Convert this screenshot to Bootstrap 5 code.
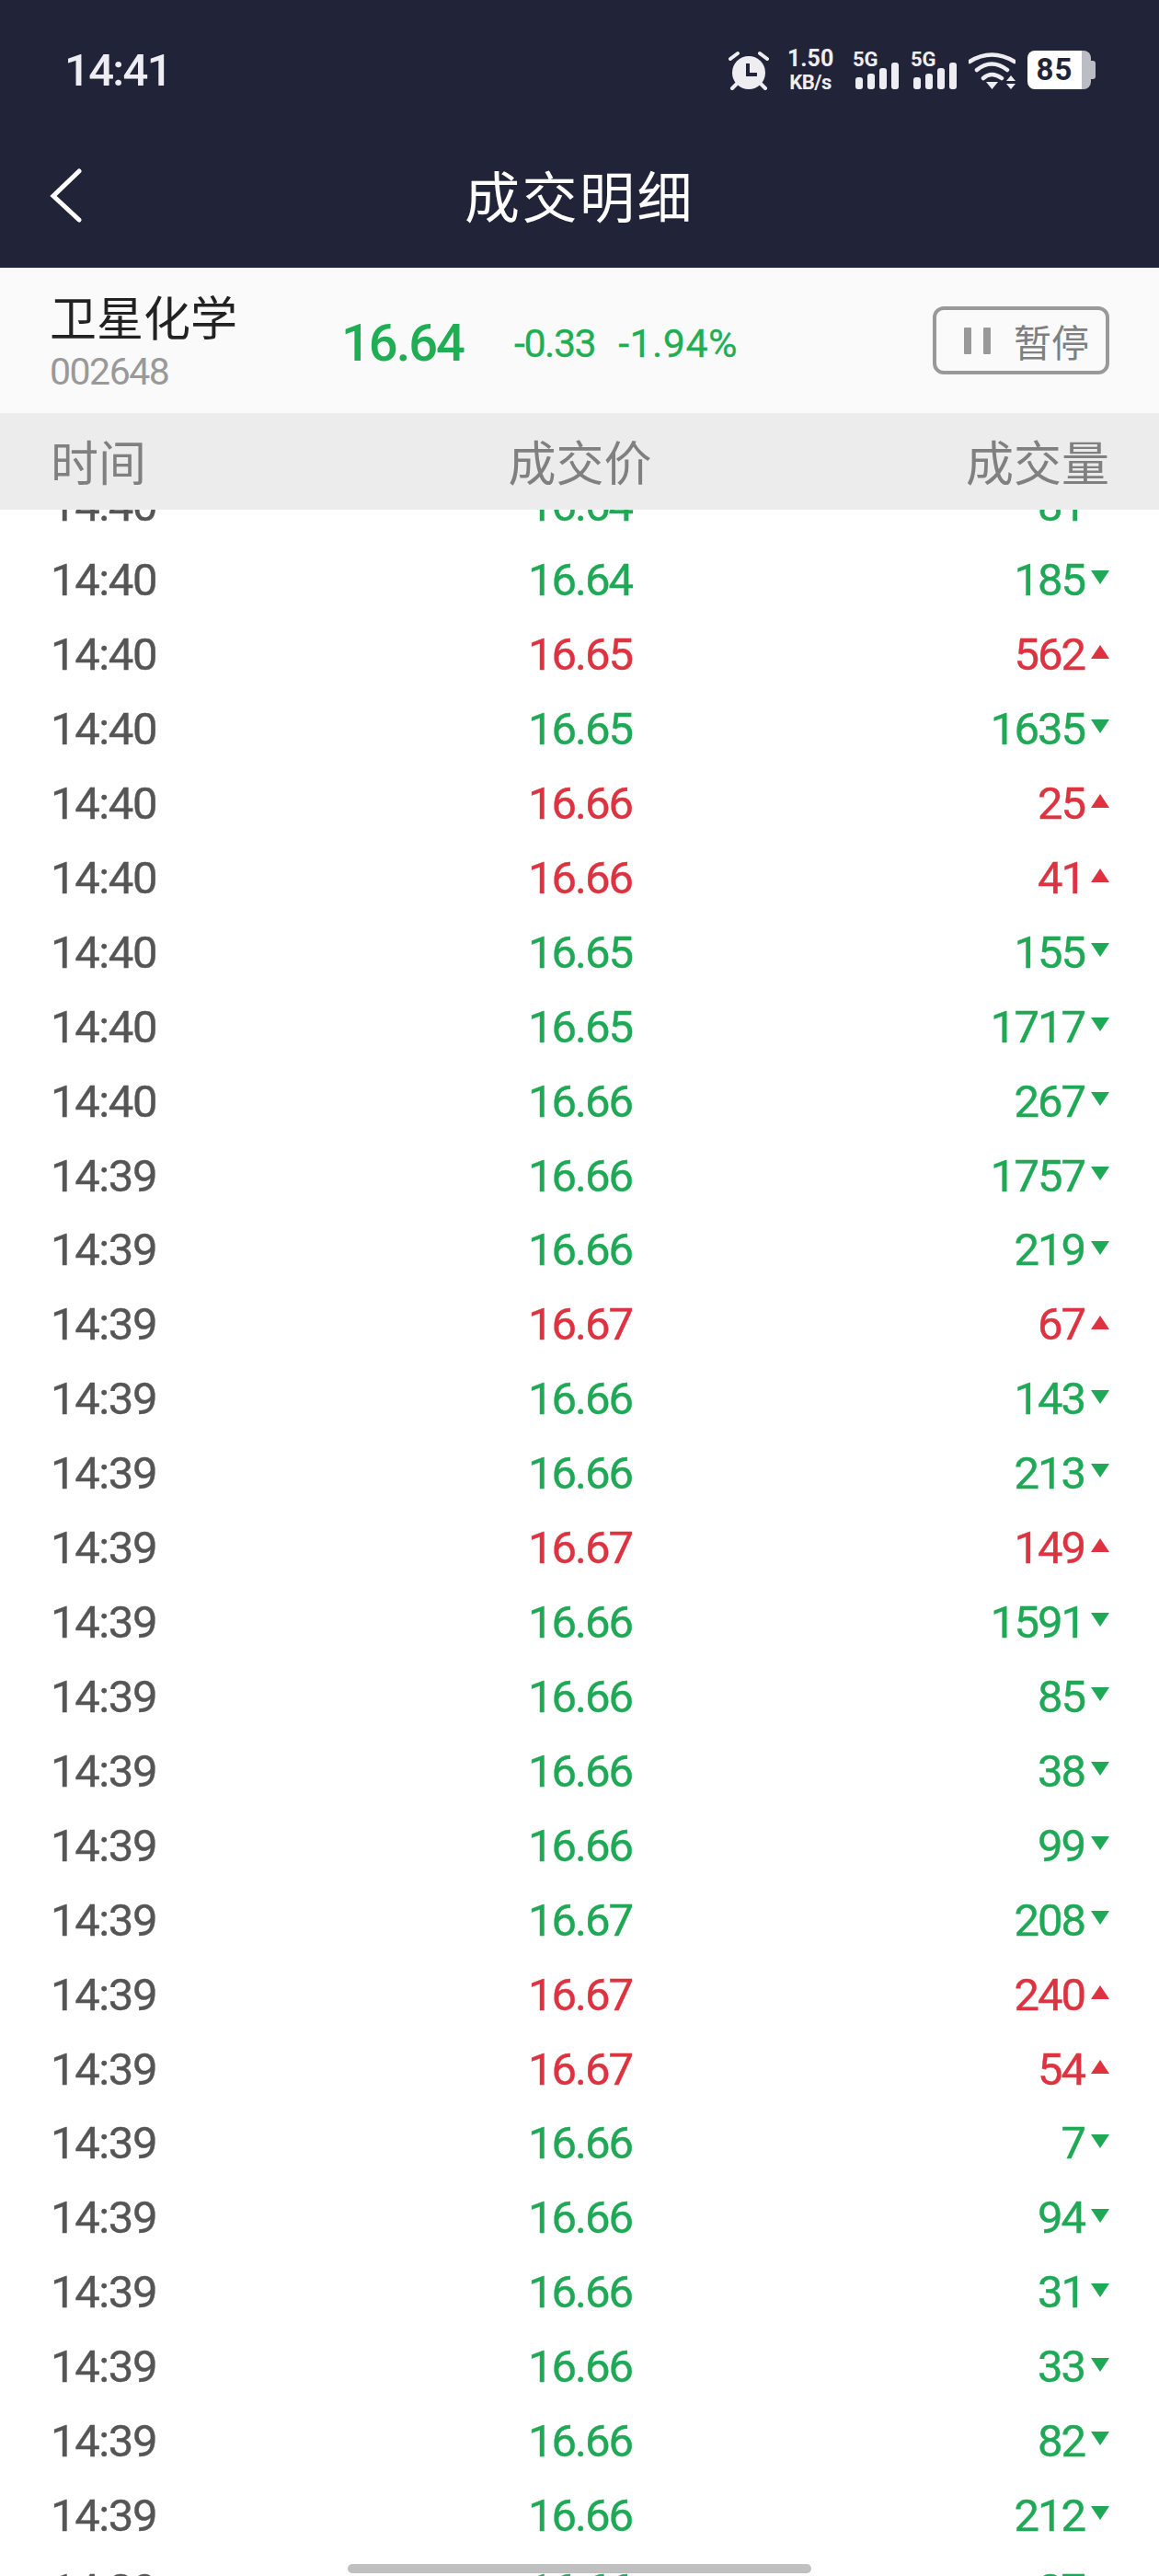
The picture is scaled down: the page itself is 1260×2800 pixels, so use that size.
<!DOCTYPE html>
<html lang="zh-CN">
<head>
<meta charset="UTF-8" />
<title>成交明细</title>
<link href="https://cdn.jsdelivr.net/npm/bootstrap@5.3.3/dist/css/bootstrap.min.css" rel="stylesheet">
<style>
    html, body { height: 2800px; overflow: hidden; background: #fff; }
    body { width: 1260px; font-family: Roboto, "Noto Sans CJK SC", sans-serif; position: relative; }
    .cjk { font-family: "Noto Sans CJK SC", sans-serif; }
    .status-bar { height: 152px; background: #212338; color: #eeeef2; padding: 0 69px 0 70px; }
    .clock { font-size: 49px; font-weight: 500; letter-spacing: -1.7px; line-height: 1; }
    .status-icons { gap: 13px; }
    .net-speed { width: 50px; margin: 0 8px 0 7px; font-weight: 700; line-height: 1; text-align: center; }
    .net-speed div:first-child { font-size: 25px; margin-bottom: 3px; }
    .net-speed div:last-child { font-size: 22px; letter-spacing: -.5px; }
    .sig-text { font: 700 22px Roboto, sans-serif; fill: #eeeef2; }
    .batt { height: 42px; width: 74px; }
    .batt-body { width: 59px; background: #fff; color: #212338; font-size: 33px; font-weight: 700; border-radius: 8px 0 0 8px; line-height: 42px; text-align: center; letter-spacing: 1px; }
    .batt-end { width: 10px; background: #bcbcc4; border-radius: 0 8px 8px 0; }
    .batt-nub { width: 5px; height: 20px; background: #bcbcc4; border-radius: 0 3px 3px 0; align-self: center; }
    .title-bar { height: 139px; background: #212338; color: #fff; padding: 0 0 21px 0; }
    .bar-side { flex: 1; padding: 3px 0 0 54px; }
    .title-bar h1 { font-size: 60px; font-weight: 400; letter-spacing: 2.500px; margin: 0; line-height: 1; }
    .info-bar { height: 158px; background: #fafafa; padding: 0 54px 0 54px; }
    .stock-id { width: 317px; align-self: flex-start; }
    .stock-name { font-size: 51px; line-height: 1; color: #222; margin-top: 27px; }
    .stock-code { font-size: 41px; line-height: 1; color: #999; margin-top: 15px; letter-spacing: -1.5px; }
    .stock-price { font-size: 56px; font-weight: 500; color: #1fae54; width: 187px; line-height: 1; letter-spacing: -2px; margin-top: 6px; }
    .stock-chg { font-size: 43px; color: #1fae54; line-height: 1; gap: 25px; margin-top: 6px; margin-left: 1px; -webkit-text-stroke: .3px #1fae54; }
    .chg-abs { letter-spacing: -1.5px; }
    .chg-pct { letter-spacing: .4px; }
    .pause-btn { width: 192px; height: 74px; border: 4px solid #999; border-radius: 12px; color: #7f7f7f; font-size: 41px; line-height: 1; background: transparent; padding: 0 0 0 30px; }
    .pause-bar { width: 8px; height: 29px; background: #999; border-radius: 1px; }
    .pause-gap { margin-left: 13px; margin-right: 25px; }
    .head-band { height: 105px; background: #ececec; color: #808080; font-size: 52px; padding: 0 54px 2px 55px; }
    .head-band span { flex: 1; }
    .trade-list { height: 2246px; overflow: hidden; }
    .trade-inner { margin-top: -44.500px; }
    .trade-row { height: 80.93px; padding: 0 54px 0 54px; font-size: 49px; letter-spacing: -2px; -webkit-text-stroke: .4px; }
    .col-cell { flex: 1; }
    .col-time { color: #555; letter-spacing: -1.4px; padding-left: 1px; }
    .up-c { color: #dd3340; }
    .dn-c { color: #1fa855; }
    .tri { width: 20px; margin-left: 7px; margin-top: -6px; flex: none; }
    .home-bar { position: absolute; left: 378px; top: 2787px; width: 504px; height: 10px; border-radius: 5px; background: #c0c0c0; }
</style>
</head>
<body>
    <div class="status-bar d-flex justify-content-between align-items-center">
        <div class="clock">14:41</div>
        <div class="status-icons d-flex align-items-center">
            <svg width="44" height="43" viewBox="0 0 44 43">
                <circle cx="22" cy="24" r="18" fill="#eeeef2"/>
                <path d="M2 9 L10 3 M42 9 L34 3 M4 41 L9 36 M40 41 L35 36" stroke="#eeeef2" stroke-width="4" stroke-linecap="round"/>
                <path d="M21 14 V26 H31" fill="none" stroke="#212338" stroke-width="4"/>
            </svg>
            <div class="net-speed"><div>1.50</div><div>KB/s</div></div>
            <svg width="50" height="41" viewBox="0 0 50 41">
                <text class="sig-text" x="0" y="16">5G</text>
                <rect x="3" y="28" width="8" height="13" rx="3" fill="#eeeef2"/>
                <rect x="16" y="24" width="8" height="17" rx="3" fill="#eeeef2"/>
                <rect x="29" y="18" width="8" height="23" rx="3" fill="#eeeef2"/>
                <rect x="42" y="12" width="8" height="29" rx="3" fill="#eeeef2"/>
            </svg>
            <svg width="50" height="41" viewBox="0 0 50 41">
                <text class="sig-text" x="0" y="16">5G</text>
                <rect x="3" y="28" width="8" height="13" rx="3" fill="#eeeef2"/>
                <rect x="16" y="24" width="8" height="17" rx="3" fill="#eeeef2"/>
                <rect x="29" y="18" width="8" height="23" rx="3" fill="#eeeef2"/>
                <rect x="42" y="12" width="8" height="29" rx="3" fill="#eeeef2"/>
            </svg>
            <svg width="51" height="41" viewBox="0 0 51 41">
                <path d="M1 11 Q25 -4 50 11 M9 20 Q25 7 42 20 M16 29 Q25 21 36 29" fill="none" stroke="#eeeef2" stroke-width="4.5" stroke-linecap="round"/>
                <path d="M19 33 H32 L25.500 41 Z M41 32 H51 L46 26 Z M41 35 H51 L46 41 Z" fill="#eeeef2"/>
            </svg>
            <div class="batt d-flex">
                <div class="batt-body">85</div>
                <div class="batt-end"></div>
                <div class="batt-nub"></div>
            </div>
        </div>
    </div>
    <div class="title-bar d-flex align-items-center">
        <div class="bar-side">
            <svg class="d-block" width="36" height="60" viewBox="0 0 36 60"><path d="M32 3 L4 30 L32 56" fill="none" stroke="#fff" stroke-width="5" stroke-linecap="round"/></svg>
        </div>
        <h1 class="cjk">成交明细</h1>
        <div class="bar-side"></div>
    </div>
    <div class="info-bar d-flex align-items-center">
        <div class="stock-id flex-none">
            <div class="stock-name cjk">卫星化学</div>
            <div class="stock-code">002648</div>
        </div>
        <div class="stock-price">16.64</div>
        <div class="stock-chg d-flex"><span class="chg-abs">-0.33</span><span class="chg-pct">-1.94%</span></div>
        <button class="pause-btn ms-auto d-flex align-items-center cjk" type="button">
            <span class="pause-bar"></span><span class="pause-bar pause-gap"></span>暂停
        </button>
    </div>
    <div class="head-band d-flex align-items-center cjk">
        <span>时间</span><span class="text-center">成交价</span><span class="text-end">成交量</span>
    </div>
    <div class="trade-list"><div class="trade-inner" id="rows"></div></div>
    <div class="home-bar"></div>
    <script>
        const data = [
            ['14:40','16.64','81','d'],['14:40','16.64','185','d'],['14:40','16.65','562','u'],['14:40','16.65','1635','d'],
            ['14:40','16.66','25','u'],['14:40','16.66','41','u'],['14:40','16.65','155','d'],['14:40','16.65','1717','d'],
            ['14:40','16.66','267','d'],['14:39','16.66','1757','d'],['14:39','16.66','219','d'],['14:39','16.67','67','u'],
            ['14:39','16.66','143','d'],['14:39','16.66','213','d'],['14:39','16.67','149','u'],['14:39','16.66','1591','d'],
            ['14:39','16.66','85','d'],['14:39','16.66','38','d'],['14:39','16.66','99','d'],['14:39','16.67','208','d'],
            ['14:39','16.67','240','u'],['14:39','16.67','54','u'],['14:39','16.66','7','d'],['14:39','16.66','94','d'],
            ['14:39','16.66','31','d'],['14:39','16.66','33','d'],['14:39','16.66','82','d'],['14:39','16.66','212','d'],
            ['14:39','16.66','87','d']
        ];
        const box = document.getElementById('rows');
        data.forEach(r => {
            const c = r[3] === 'u' ? 'up-c' : 'dn-c';
            const tri = r[3] === 'u'
                ? '<svg class="tri" height="15" viewBox="0 0 20 15"><path d="M10 0 L20 15 L0 15 Z" fill="#dd3340"/></svg>'
                : '<svg class="tri" height="15" viewBox="0 0 20 15"><path d="M0 0 L20 0 L10 15 Z" fill="#1fa855"/></svg>';
            box.innerHTML += `<div class="trade-row d-flex align-items-center">
                <div class="col-cell col-time">${r[0]}</div>
                <div class="col-cell text-center ${c}">${r[1]}</div>
                <div class="col-cell ${c} d-flex align-items-center justify-content-end"><span>${r[2]}</span>${tri}</div>
            </div>`;
        });
    </script>
<script src="https://cdn.jsdelivr.net/npm/bootstrap@5.3.3/dist/js/bootstrap.bundle.min.js"></script>
</body>
</html>
